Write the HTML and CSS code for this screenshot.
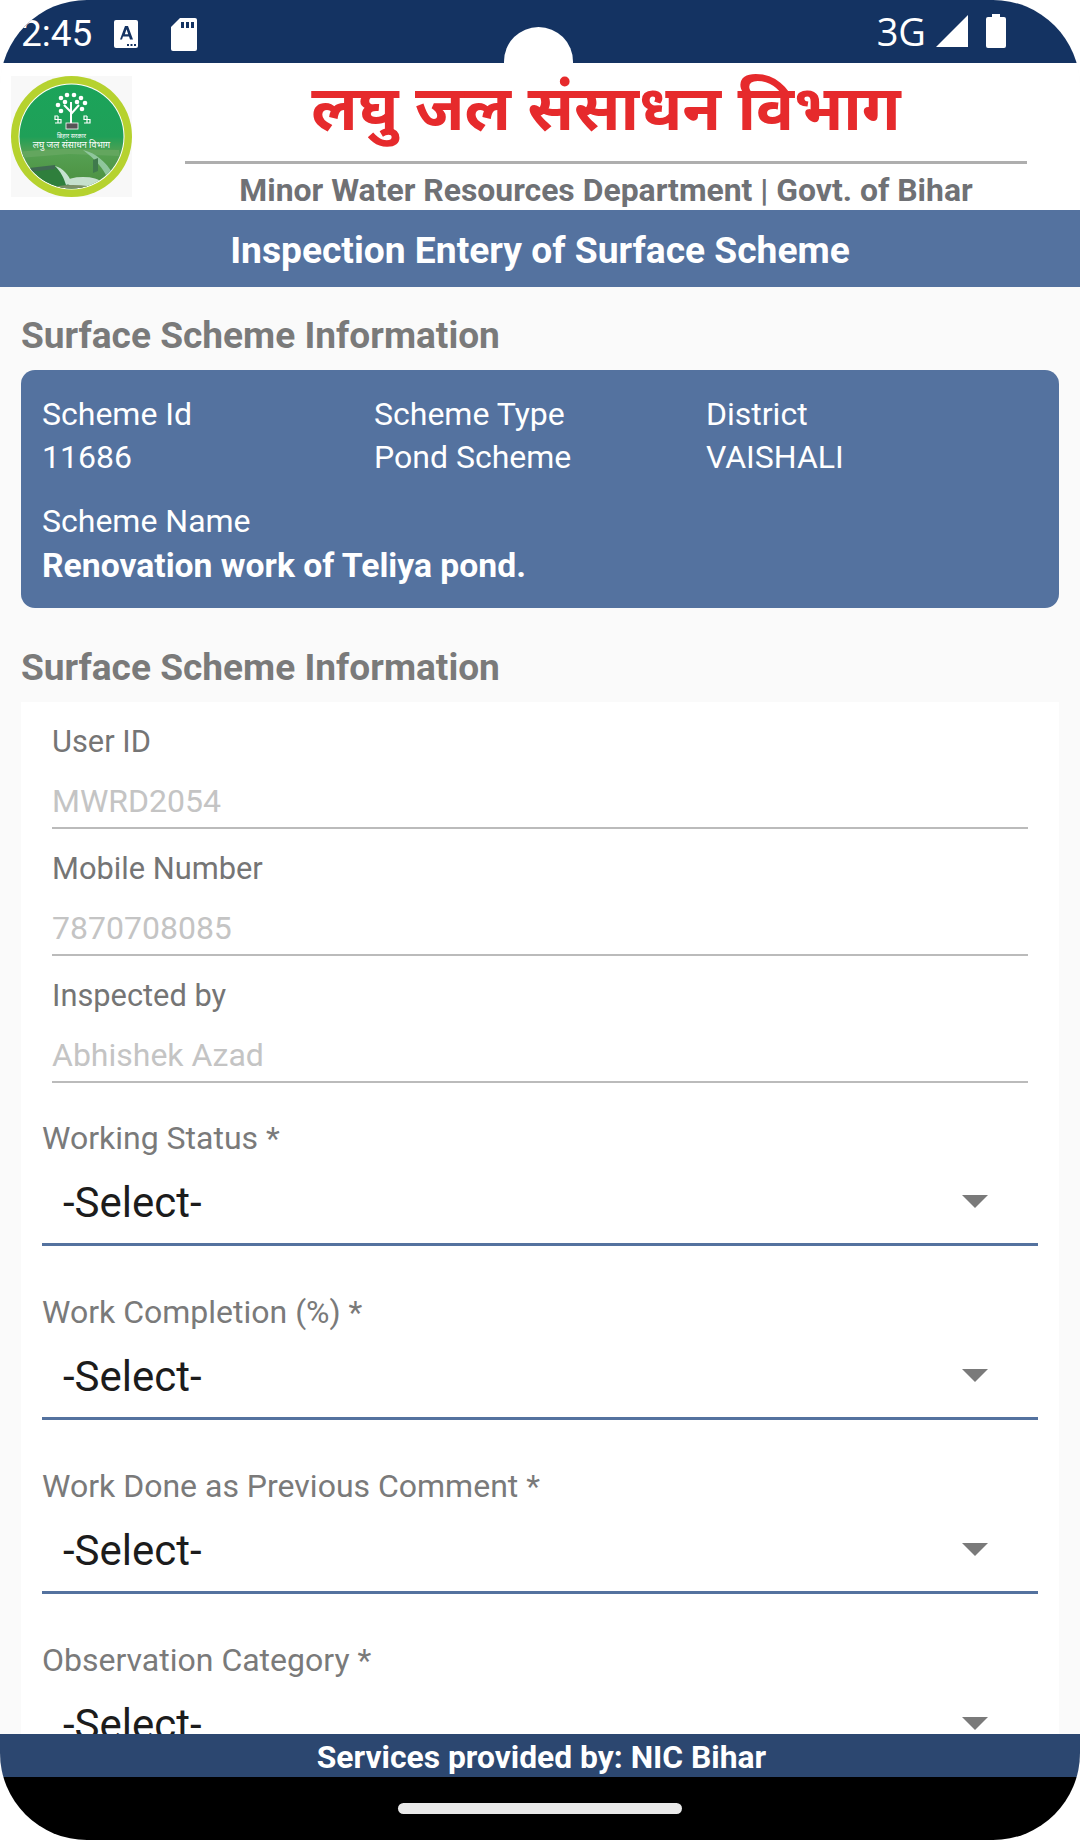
FILE: index.html
```html
<!DOCTYPE html>
<html lang="hi">
<head>
<meta charset="utf-8">
<title>Inspection Entery of Surface Scheme</title>
<link rel="stylesheet" href="styles.css">
</head>
<body>
<div class="phone">
  <div class="statusbar">
    <div class="status-left">
      <span class="clock">2:45</span>
      <svg class="ico-a" viewBox="0 0 24 28"><path d="M2 0h20a2 2 0 0 1 2 2v24a2 2 0 0 1-2 2H2a2 2 0 0 1-2-2V2a2 2 0 0 1 2-2z" fill="#fff"/><path d="M6 19.500L11 6h3l5 13.500h-3l-1-3h-6l-1 3zM10.800 14.300h3.400L12.500 9.200z" fill="#143362"/><path d="M13 24h2v2h-2zM16.500 24h2v2h-2zM20 24h2v2h-2z" fill="#143362"/></svg>
      <svg class="ico-sd" viewBox="0 0 26 33"><path d="M9 0h15a2 2 0 0 1 2 2v29a2 2 0 0 1-2 2H2a2 2 0 0 1-2-2V9z" fill="#fff"/><path d="M10 4h3v6h-3zM15 4h3v6h-3zM20 4h3v6h-3z" fill="#143362"/></svg>
    </div>
    <div class="notch"></div>
    <div class="status-right">
      <span class="net">3G</span>
      <svg class="ico-signal" viewBox="0 0 32 32"><path d="M32 0v32H0z" fill="#fff"/></svg>
      <svg class="ico-batt" viewBox="0 0 20 34"><path d="M6 0h8v3h4a2 2 0 0 1 2 2v27a2 2 0 0 1-2 2H2a2 2 0 0 1-2-2V5a2 2 0 0 1 2-2h4z" fill="#fff"/></svg>
    </div>
  </div>

  <header class="brand">
    <div class="logo-box">
      <svg class="logo" viewBox="0 0 121 121">
        <defs>
          <linearGradient id="logoFill" x1="0" y1="0" x2="0" y2="1">
            <stop offset="0" stop-color="#1ba45a"/>
            <stop offset="0.5" stop-color="#1fa058"/>
            <stop offset="0.66" stop-color="#55a052"/>
            <stop offset="1" stop-color="#4b8f3f"/>
          </linearGradient>
          <clipPath id="logoClip"><circle cx="60.500" cy="60.500" r="52"/></clipPath>
        </defs>
        <circle cx="60.500" cy="60.500" r="60.500" fill="#b6d22f"/>
        <circle cx="60.500" cy="60.500" r="53" fill="#fff"/>
        <circle cx="60.500" cy="60.500" r="52" fill="url(#logoFill)"/>
        <g clip-path="url(#logoClip)">
          <path d="M8 76c14-2 34-3 50-3l50 1v6l-50-2-50 4z" fill="#63a65e"/>
          <path d="M12 100c10-8 22-10 34-9l12 14 34 8-4 10H12z" fill="#2f7f3c"/>
          <path d="M72 74c13 3 23 12 30 24l-5 5c-5-11-13-20-25-29z" fill="#8fc69c"/>
          <path d="M44 90c8 2 13 8 17 17l-6 2c-2-7-5-13-11-19z" fill="#c4e2cf"/>
          <path d="M18 92l26-3v4l-26 3z" fill="#3f6a52"/>
          <path d="M82 84l5-2v13l-5 2z" fill="#3f7a4c"/>
          <ellipse cx="72" cy="106" rx="17" ry="5" fill="#c6e0cd"/>
          <ellipse cx="62" cy="112" rx="20" ry="3" fill="#7d8f66"/>
        </g>
        <path d="M60 47V26M60 36l-7-7M60 38l8-9" stroke="#fff" stroke-width="2" fill="none"/>
        <g fill="#fff">
          <circle cx="50" cy="22" r="2.300"/><circle cx="56" cy="19" r="2.300"/><circle cx="63" cy="19" r="2.300"/><circle cx="70" cy="22" r="2.300"/><circle cx="74" cy="27" r="2.300"/><circle cx="47" cy="29" r="2.300"/><circle cx="54" cy="26" r="2.300"/><circle cx="66" cy="26" r="2.300"/><circle cx="71" cy="33" r="2.300"/><circle cx="50" cy="35" r="2.300"/>
        </g>
        <path d="M47 40h-3v3.500h6v3.500h-6M47 40v7M76 40h-3v3.500h6v3.500h-6M76 40v7" stroke="#fff" stroke-width="1.200" fill="none"/>
        <rect x="55" y="47" width="12" height="6" fill="#555" stroke="#fff" stroke-width="0.800"/>
        <text class="logo-small" x="60.500" y="62" text-anchor="middle">बिहार सरकार</text>
        <text class="logo-name" x="60.500" y="72" text-anchor="middle">लघु जल संसाधन विभाग</text>
      </svg>
    </div>
    <div class="brand-text">
      <h1 class="brand-title">लघु जल संसाधन विभाग</h1>
      <div class="brand-rule"></div>
      <p class="brand-sub">Minor Water Resources Department | Govt. of Bihar</p>
    </div>
  </header>

  <div class="pagebar">Inspection Entery of Surface Scheme</div>

  <main class="content">
    <h2 class="section-title">Surface Scheme Information</h2>
    <section class="scheme-card">
      <div class="scheme-grid">
        <div><div>Scheme Id</div><div class="scheme-val">11686</div></div>
        <div><div>Scheme Type</div><div class="scheme-val">Pond Scheme</div></div>
        <div><div>District</div><div class="scheme-val">VAISHALI</div></div>
      </div>
      <div class="scheme-name-label">Scheme Name</div>
      <div class="scheme-name">Renovation work of Teliya pond.</div>
    </section>

    <h2 class="section-title second">Surface Scheme Information</h2>
    <section class="form">
      <div class="ro-field"><label class="ro-label">User ID</label><div class="ro-value">MWRD2054</div></div>
      <div class="ro-field"><label class="ro-label">Mobile Number</label><div class="ro-value">7870708085</div></div>
      <div class="ro-field"><label class="ro-label">Inspected by</label><div class="ro-value">Abhishek Azad</div></div>

      <div class="sel-field"><label class="sel-label">Working Status *</label><div class="sel-box"><span>-Select-</span><i class="caret"></i></div></div>
      <div class="sel-field"><label class="sel-label">Work Completion (%) *</label><div class="sel-box"><span>-Select-</span><i class="caret"></i></div></div>
      <div class="sel-field"><label class="sel-label">Work Done as Previous Comment *</label><div class="sel-box"><span>-Select-</span><i class="caret"></i></div></div>
      <div class="sel-field"><label class="sel-label">Observation Category *</label><div class="sel-box"><span>-Select-</span><i class="caret"></i></div></div>
    </section>
  </main>

  <footer class="services">Services provided by: NIC Bihar</footer>
  <div class="navbar"><div class="home-pill"></div></div>
</div>
</body>
</html>
```
FILE: styles.css
```css
* { box-sizing: border-box; }
html, body { margin: 0; padding: 0; background: #fff; }
body { width: 1080px; height: 1840px; overflow: hidden; font-family: Roboto, "Liberation Sans", sans-serif; }

.phone { width: 1080px; height: 1840px; display: flex; flex-direction: column; overflow: hidden; border-radius: 87px; background: #fafafa; }

.statusbar { height: 63px; flex: none; background: #143362; color: #fff; display: flex; justify-content: space-between; align-items: flex-start; position: relative; }
.status-left { display: flex; align-items: center; padding: 15px 0 0 21px; }
.clock { font-size: 37px; line-height: 38px; width: 71px; }
.ico-a { width: 24px; height: 28px; margin-left: 22px; }
.ico-sd { width: 26px; height: 33px; margin-left: 33px; }
.status-right { display: flex; align-items: center; padding: 14px 74px 0 0; }
.net { font-family: "Open Sans", Roboto, sans-serif; font-size: 38px; line-height: 34px; margin-right: 10px; }
.ico-signal { width: 32px; height: 32px; }
.ico-batt { width: 20px; height: 34px; margin-left: 18px; }
.notch { position: absolute; left: 504px; top: 27px; width: 69px; height: 36px; background: #fff; border-radius: 35px 35px 0 0; }

.brand { height: 147px; flex: none; background: #fff; display: flex; padding: 13px 0 0 11px; }
.logo-box { width: 121px; height: 121px; background: #f8f8f8; flex: none; }
.logo { display: block; width: 121px; height: 121px; }
.logo-small { font-family: "Noto Sans", "DejaVu Sans", sans-serif; font-size: 6px; fill: #fff; }
.logo-name { font-family: "Noto Sans", "DejaVu Sans", sans-serif; font-size: 9px; fill: #fff; }
.brand-text { margin-left: 53px; width: 842px; display: flex; flex-direction: column; align-items: center; }
.brand-title { margin: 0; height: 85px; font-family: "Noto Sans", "DejaVu Sans", sans-serif; font-weight: 700; font-size: 63px; line-height: 60px; color: #e62a2c; white-space: nowrap; }
.brand-rule { width: 100%; height: 3px; background: #aeaeae; flex: none; }
.brand-sub { margin: 8px 0 0; font-weight: 700; font-size: 31.9px; line-height: 36px; color: #6f7175; white-space: nowrap; }

.pagebar { height: 77px; flex: none; background: #54729f; color: #fff; font-weight: 700; font-size: 37.2px; line-height: 81px; text-align: center; }

.content { flex: 1; min-height: 0; overflow: hidden; padding: 0 21px; }
.section-title { margin: 27px 0 12px; font-weight: 700; font-size: 37.1px; line-height: 44px; color: #7a7a7a; }
.section-title.second { margin: 38px 0 12px; }

.scheme-card { height: 238px; background: #54729f; border-radius: 14px; color: #fff; padding: 23px 21px; font-size: 32px; line-height: 43px; }
.scheme-grid { display: grid; grid-template-columns: 332px 332px 1fr; }
.scheme-name-label { margin-top: 21px; }
.scheme-name { font-weight: 700; font-size: 33.7px; margin-top: 1px; }

.form { background: #fff; padding-top: 12px; height: 1100px; }
.ro-field { height: 127px; padding: 8px 31px 0; }
.ro-label { display: block; font-size: 30.8px; line-height: 40px; color: #757575; margin-bottom: 19px; }
.ro-value { font-size: 32px; line-height: 40px; color: #c4c4c4; height: 48px; border-bottom: 2px solid #bbb; }

.sel-field { height: 174px; padding: 23px 21px 0; }
.sel-label { display: block; font-size: 32px; line-height: 40px; color: #7a7a7a; }
.sel-box { margin-top: 12px; height: 76px; padding: 7px 50px 0 21px; border-bottom: 3px solid #54729f; display: flex; justify-content: space-between; align-items: flex-start; font-size: 42px; line-height: 52px; color: #1c1c1c; }
.caret { width: 0; height: 0; margin-top: 18px; border-left: 13px solid transparent; border-right: 13px solid transparent; border-top: 13px solid #7a7a7a; }

.services { height: 43px; flex: none; background: #2c4770; color: #fff; font-weight: 700; font-size: 31.8px; line-height: 46px; text-align: center; padding-left: 3px; }
.navbar { height: 63px; flex: none; background: #000; display: flex; justify-content: center; padding-top: 26px; }
.home-pill { width: 284px; height: 11px; border-radius: 6px; background: #e9e9e9; }
```
